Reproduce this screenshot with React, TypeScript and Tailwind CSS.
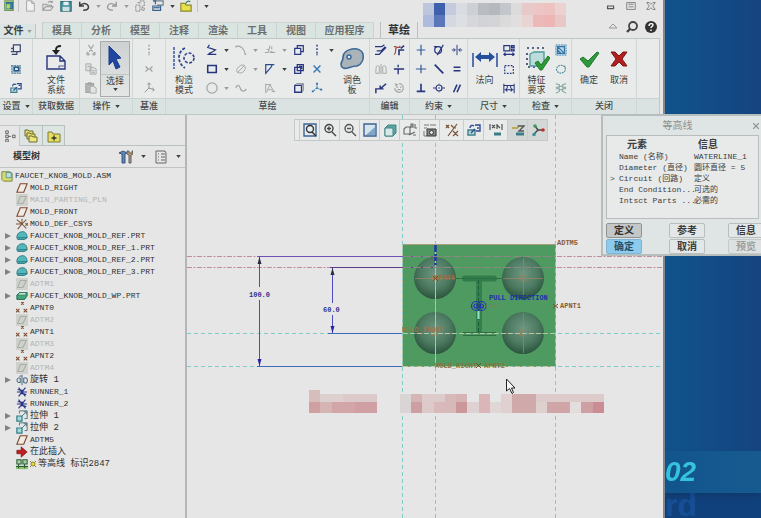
import { ReactNode } from "react";
import clsx from "clsx";

const NAVY = "#27357e";
const GRAY = "#a3a6a6";
const TEAL = "#4a8f99";

function Icon({ children, size = "sm" }: { children: ReactNode; size?: "xs" | "sm" | "lg" }) {
  return (
    <svg
      viewBox={size === "lg" ? "0 0 26 26" : "0 0 14 14"}
      className={clsx(
        "shrink-0",
        size === "xs" && "w-3 h-3",
        size === "sm" && "w-3.5 h-3.5",
        size === "lg" && "w-[26px] h-[26px]"
      )}
      fill="none"
      stroke={NAVY}
      strokeWidth="1.4"
      aria-hidden="true"
    >
      {children}
    </svg>
  );
}

function Caret({ dim = false }: { dim?: boolean }) {
  return (
    <svg viewBox="0 0 6 4" className="w-[5px] h-[3px] shrink-0" aria-hidden="true">
      <path d="M0 0h6L3 4z" fill={dim ? "#9a9c9c" : "#3d3f3f"} />
    </svg>
  );
}

/* ---------- quick access bar ---------- */

const quickIcons: Record<string, ReactNode> = {
  app: (
    <>
      <path d="M2 1h10v11H2z" fill="#cfe08a" stroke="#6f9a5a" />
      <path d="M4 3h7v7H4z" fill="#3f8f9c" stroke="#2f6d8a" />
      <path d="M4 5h4v5H4z" fill="#b7d86c" stroke="none" />
    </>
  ),
  new: <path d="M3 1h6l3 3v9H3zM9 1v3h3" fill="#f1f1f1" stroke="#9b9d9d" strokeWidth="1" />,
  open: <path d="M1 12V5h4l1 1h5v2M1 12l3-4h9l-3 4zM7 3c2-2 4-2 5 0m0 0V1m0 2h-2" stroke="#999" strokeWidth="1.2" />,
  save: (
    <>
      <path d="M1 2h12v11H1z" fill="#4b9aa3" stroke="#2c6b78" />
      <path d="M4 2h6v4H4z" fill="#e4eeee" stroke="none" />
      <path d="M3 8h8v5H3z" fill="#cfe0e0" stroke="none" />
    </>
  ),
  undo: <path d="M6 12c5 0 7-2 6-5S7 3 3 6M2 2v5h5" stroke="#3f4242" strokeWidth="1.8" />,
  redo: <path d="M8 12C3 12 1 10 2 7s5-4 9-1M12 2v5H7" stroke="#999c9c" strokeWidth="1.6" />,
  regen: <path d="M2 6h5v7H2zM7 4V1h5v6H9M4 3h2M9 9h3v3H9z" stroke="#999" strokeDasharray="2 1" />,
  windows: (
    <>
      <path d="M2 1h11v5H6" stroke="#6d7f92" />
      <path d="M1 7h9v5H1zM1 1h3v4" stroke="#35608f" />
      <path d="M2 9h7" stroke="#35608f" />
    </>
  ),
  close: (
    <>
      <path d="M1 4h5l1 2h6v7H1z" fill="#e9e04e" stroke="#8c8a2e" />
      <path d="M7 4c1-3 3-3 5-2" stroke="#3b7a4a" />
    </>
  ),
};

function QuickButton({ name, label }: { name: string; label: string }) {
  return (
    <button type="button" aria-label={label} className="w-[18px] flex justify-center">
      <Icon size="xs">{quickIcons[name]}</Icon>
    </button>
  );
}

const titleBlocks = [
  ["#bcc6dc", "#3e60ad", "#c3cbdd", "#d9dce2", "#cdd0d4", "#b9bdc2", "#b4b8bf", "#c3c6ca", "#dcdbdc", "#e8c9ca", "#ecc5c4", "#edc3c2", "#ebd1d0"],
  ["#aebbdc", "#5b77bb", "#d5d8e0", "#dedfe3", "#d6d7da", "#d1d3d6", "#d3d4d6", "#dadadb", "#e0dedf", "#ead3d3", "#edb9b8", "#edb5b4", "#e8c8c7"],
];

function QuickAccess() {
  return (
    <div className="flex items-center h-3 w-full">
      <QuickButton name="app" label="应用程序菜单" />
      <span className="w-px h-3 bg-[#c3c6c6] mr-[2px]" />
      <QuickButton name="new" label="新建" />
      <QuickButton name="open" label="打开" />
      <QuickButton name="save" label="保存" />
      <QuickButton name="undo" label="撤消" />
      <span className="w-[10px] flex justify-center"><Caret dim /></span>
      <QuickButton name="redo" label="重做" />
      <span className="w-[10px] flex justify-center"><Caret dim /></span>
      <QuickButton name="regen" label="重新生成" />
      <QuickButton name="windows" label="窗口" />
      <span className="w-[10px] flex justify-center"><Caret /></span>
      <QuickButton name="close" label="关闭" />
      <span className="w-px h-3 ml-[2px] bg-[#c3c6c6] mr-[6px]" />
      <Caret />
      <div className="ml-auto flex gap-2 pr-[6px]">
        <button type="button" aria-label="最小化">
          <Icon size="xs"><path d="M3 7h7v3H3z" stroke="#555" /></Icon>
        </button>
        <button type="button" aria-label="还原">
          <Icon size="xs"><path d="M2 3h10v8H2zM4 5h6M4 8h6" stroke="#777" strokeWidth="1" /></Icon>
        </button>
        <button type="button" aria-label="关闭窗口">
          <Icon size="xs"><path d="M2 3h3l2 2 2-2h3L9 7l3 4H9L7 9l-2 2H2l3-4z" stroke="#777" strokeWidth="1" /></Icon>
        </button>
      </div>
    </div>
  );
}

const tabs = ["模具", "分析", "模型", "注释", "渲染", "工具", "视图", "应用程序"];

function TabRow() {
  return (
    <nav className="flex items-end mt-[10px] h-4 text-[10px] leading-[14px] text-[#6b6f6f] font-bold">
      <button type="button" className="w-9 h-[14px] flex items-center justify-center gap-[3px] bg-[#dbe5e3] border-r border-[#bdc6c5] text-[#3a3d3d]">
        文件 <Caret dim />
      </button>
      <div className="flex h-4 ml-[6px] bg-[#dae5e2] border-l border-t border-[#c4cfcd] border-t-[#ccd5d3]">
        {tabs.map((tab) => (
          <button
            key={tab}
            type="button"
            className={clsx("border-r border-[#cad3d1]", tab === "应用程序" ? "w-[58px]" : "w-[39px]")}
          >
            {tab}
          </button>
        ))}
      </div>
      <button type="button" className="w-[38px] h-4 ml-[6px] border-x border-[#b9c2c1] text-[11px] text-[#2f3232]">
        草绘
      </button>
      <div className="ml-auto flex items-center gap-[5px] pr-[5px] mb-1">
        <button type="button" aria-label="最小化功能区">
          <Icon><path d="M3 8h8L7 4z" stroke="#999" strokeWidth="1" /></Icon>
        </button>
        <button type="button" aria-label="搜索">
          <Icon>
            <circle cx="8" cy="6" r="4" stroke="#444" strokeWidth="1.8" />
            <path d="M5 9l-3 3" stroke="#444" strokeWidth="2.4" />
          </Icon>
        </button>
        <button type="button" aria-label="帮助">
          <Icon>
            <circle cx="7" cy="7" r="6" fill="#333" stroke="none" />
            <path d="M5 6c0-3 4-3 4-1 0 1.500-2 1.500-2 3M7 9.500v1.500" stroke="#fff" />
          </Icon>
        </button>
      </div>
    </nav>
  );
}

/* ---------- ribbon ---------- */

const I: Record<string, ReactNode> = {
  setup1: <path d="M4 1h8v8H4zM1 9h9M4 5H2v1M2 12h6v-3" stroke="#39446e" />,
  setup2: (
    <>
      <path d="M2 3h10v9H2z" fill="#a9c4cd" stroke="#5f8aa0" strokeDasharray="2 1" />
      <path d="M5 5h5v4H5z" fill="#e2eaee" stroke="#27528a" strokeWidth="1.8" />
    </>
  ),
  setup3: (
    <>
      <path d="M1 7h7v5H1z" fill="#b8dada" stroke="#3c7f8c" />
      <path d="M8 2h5v6H9M3 5c0-3 3-3 4-2M4 10l4-4M10 4h2" stroke="#2b4a92" />
    </>
  ),
  cut: <path d="M4 1l5 8M10 1L5 9M3 10a1.500 1.500 0 1 0 2 2zM11 10a1.500 1.500 0 1 1-2 2z" stroke={GRAY} />,
  copy: <path d="M1 1h6v8H1zM6 5h4l3 2v6H6zM3 4h3M8 9h3M8 11h3" stroke={GRAY} fill="#dedfdf" strokeWidth="1" />,
  paste: (
    <>
      <path d="M1 2h9v10H1zM4 1h3v2H4z" fill="#b4b6b6" stroke={GRAY} />
      <path d="M6 5h4l3 2v6H6z" fill="#e2e3e3" stroke={GRAY} strokeWidth="1" />
    </>
  ),
  axis: <path d="M7 1v2M7 5v2M7 9v2M7 12v1" stroke="#8d9090" />,
  point: <path d="M3 4l3 3-3 3M11 4L8 7l3 3M6 7h2" stroke="#9a9d9d" />,
  csys: <path d="M7 7V1M7 7l6 2M7 7l-5 5M5 3l2-2 2 2M11 7l2 2-2 2" stroke="#8d9090" strokeWidth="1.100" />,
  line: <path d="M4 1L2 4l9 3-8 5h9M2 4l3 1M3 12l2-2" />,
  rect: <path d="M2 3h10v8H2z" strokeWidth="1.800" />,
  circle: <circle cx="7" cy="7" r="6" stroke={GRAY} />,
  arc: <path d="M1 3c6-2 10 3 11 9M1 2v2M11 12h2" stroke={GRAY} />,
  ellipse: <path d="M3 11C-1 7 8 0 11 3s-1 11-8 8zM3 11l8-8" stroke={GRAY} strokeWidth="1.100" />,
  spline: <path d="M1 7c1-4 4-4 5 0s5 5 7 1" stroke={GRAY} />,
  fillet: <path d="M1 10h4l2-8M7 10h6M3 6l8 4M9 3v3" stroke={GRAY} strokeWidth="1.200" />,
  chamfer: <path d="M2 13V2h10M2 12l7-8M9 4V2" stroke="#2a4a90" />,
  text: <path d="M2 2v11M2 3h6M3 12l4-9 5 9M5 9h5M9 11h4" stroke={GRAY} strokeWidth="1.100" />,
  offset: <path d="M2 5h7v7H2zM5 5V2h7v7H9" />,
  thicken: <path d="M2 5h7v7H2zM5 8V2h7v7H5zM7 4h3v3" strokeWidth="1.500" />,
  project: (
    <>
      <path d="M2 4h8v8H2z" strokeWidth="1.600" />
      <path d="M2 4l2-2h8v8l-2 2M10 4l2-2" stroke="#6c7486" strokeWidth="1" />
    </>
  ),
  cline: <path d="M7 1v2M7 5v2M7 9v2M7 12v1" strokeWidth="1.700" />,
  cpoint: <path d="M3 3l8 8M11 3l-8 8" stroke="#367ab8" strokeWidth="1.700" />,
  ccsys: (
    <>
      <path d="M7 7V2M7 7l5 2M7 7l-5 4" stroke="#3b7fae" strokeDasharray="2 1" />
      <path d="M6 1h2v2H6zM11 8h2v2h-2zM1 10h2v2H1z" fill="#3267a5" stroke="none" />
    </>
  ),
  modify: <path d="M0 3h8M0 12h5l8-8M8 3l3-2M2 8h5l5-5" />,
  mirror: <path d="M7 1v12M5 4C1 1 1 6 1 12h4zM9 4c4-3 4 2 4 8H9z" stroke={GRAY} strokeWidth="1.100" />,
  divide: <path d="M1 13V8h7M6 8l7-6M6 8V4M6 8h4" strokeWidth="1.700" />,
  trim: (
    <>
      <path d="M1 12c4 0 0-8 4-8h3V2M1 3h3" stroke="#a34a3a" />
      <path d="M7 13V7h6M9 5l4-3" strokeWidth="1.900" />
    </>
  ),
  corner: <path d="M1 7h12M6 8v5M6 2v3" strokeWidth="1.600" />,
  rotate: <path d="M7 2a5 5 0 1 1-5 5M4 6h2M8 6h2M5 9h4M2 2l3 1-2 2" stroke={GRAY} />,
  vert: <path d="M7 1v12M2 7h10" stroke="#335b9a" />,
  horiz: <path d="M1 7h12M7 2v10" stroke="#335b9a" />,
  perp: <path d="M7 2v9M2 11h10" strokeWidth="1.900" />,
  tangent: (
    <>
      <circle cx="6" cy="7" r="4" />
      <path d="M12 1L5 13M1 3h4" />
    </>
  ),
  mid: <path d="M2 2l10 10M6 6l2 2" strokeWidth="2" />,
  coin: (
    <>
      <circle cx="7" cy="7" r="3.500" />
      <path d="M0 7h3M11 7h3M6 7h2M7 2v1M7 11v1" />
    </>
  ),
  sym: <path d="M7 1v12M1 7h4M9 7h4M3 5l2 2-2 2M11 5L9 7l2 2" strokeWidth="1.100" />,
  equal: <path d="M3 5h8M3 9h8" strokeWidth="1.800" />,
  para: <path d="M3 12L7 3M7 12l4-9" strokeWidth="1.800" />,
  dim1: <path d="M1 2h7v6H1zM10 2h3v2h-3zM10 6h3v2h-3zM1 12h12M3 10l-2 2 2 2M11 10l2 2-2 2" />,
  dim2: <path d="M2 3h10v9H2z" strokeDasharray="2 1.500" />,
  dim3: <path d="M1 2v11M13 2v11M5 4v3M9 4v3M1 4h12M2 9h10M5 7L3 9l2 2M9 7l2 2-2 2" strokeWidth="1.200" />,
  insp1: (
    <>
      <path d="M1 1h12v12H1z" fill="#bcd8e6" stroke="#6a9cbc" strokeDasharray="2 1" />
      <path d="M3 3l8 8M3 7l4 4M3 3h8v8H3z" stroke="#3577a6" />
    </>
  ),
  insp2: <path d="M2 9c-2-6 8-9 10-3 1 6-7 8-10 3M10 4h2v2" stroke={TEAL} strokeDasharray="2 1" />,
  insp3: <path d="M1 2l4 1v3H1M1 8h4v3l-4 2M13 2L9 3v3h4M13 8H9v3l4 2M5 5h4M5 9h4" stroke="#7d9f9b" strokeWidth="1.200" />,
};

type Cell = { icon: string; label: string; caret?: "dim" | "dark" };

function SmallColumn({ cells, carets = false }: { cells: Cell[]; carets?: boolean }) {
  return (
    <div className="flex flex-col gap-px shrink-0">
      {cells.map((cell) => (
        <div key={cell.icon} className="flex items-center h-[18px]">
          <button type="button" aria-label={cell.label} className="w-[18px] flex justify-center">
            <Icon size="xs">{I[cell.icon]}</Icon>
          </button>
          {carets && (
            <span className="w-[11px] flex justify-center">
              {cell.caret && <Caret dim={cell.caret === "dim"} />}
            </span>
          )}
        </div>
      ))}
    </div>
  );
}

function BigButton({
  lines,
  selected = false,
  children,
}: {
  lines: string[];
  selected?: boolean;
  children: ReactNode;
}) {
  return (
    <button
      type="button"
      className={clsx(
        "w-[30px] h-14 shrink-0 flex flex-col items-center text-[9px] leading-[10px] text-[#3a3d3d]",
        selected && "border border-[#a8acac] bg-gradient-to-b from-[#cdd1d1] to-[#e4e6e6]"
      )}
    >
      <span className={clsx("h-[34px] w-full flex items-center justify-center", selected && "border-b border-[#bfc3c3] -mt-px mb-px")}>
        <Icon size="lg">{children}</Icon>
      </span>
      {lines.map((line) => (
        <span key={line} className="whitespace-nowrap">{line}</span>
      ))}
      {selected && <span className="mt-[2px]"><Caret /></span>}
    </button>
  );
}

function Group({
  label,
  width,
  caret = false,
  children,
}: {
  label: string;
  width: string;
  caret?: boolean;
  children: ReactNode;
}) {
  return (
    <section className={clsx("flex flex-col shrink-0 border-r border-[#cfd7d5]", width)}>
      <div className="flex justify-center h-[59px] pt-[2px]">{children}</div>
      <h2 className="h-4 flex items-center justify-center gap-1 bg-[#dae3e1] border-t border-[#c9d2d0] text-[9px] leading-none text-[#46494a] font-medium whitespace-nowrap">
        {label}
        {caret && <Caret />}
      </h2>
    </section>
  );
}

function Ribbon() {
  return (
    <div className="flex mr-[3px] bg-[#e8ebea] border-y border-r border-[#bfc8c6]">
      <Group label="设置" width="w-[33px]" caret>
        <SmallColumn cells={[{ icon: "setup1", label: "截面设置" }, { icon: "setup2", label: "草绘设置" }, { icon: "setup3", label: "草绘视图" }]} />
      </Group>
      <Group label="获取数据" width="w-[47px]">
        <BigButton lines={["文件", "系统"]}>
          <path d="M4 11h13l5 5v8H4zM17 11v5h5" strokeWidth="1.400" />
          <path d="M4 20v4h12v-3h6" stroke="#5a659a" strokeWidth="1.200" />
          <path d="M18 1c-4 0-5 1-5 4" stroke="#222" strokeWidth="2" />
          <path d="M9 5h8l-4 5z" fill="#222" stroke="none" />
        </BigButton>
      </Group>
      <Group label="操作" width="w-[53px]" caret>
        <SmallColumn cells={[{ icon: "cut", label: "剪切" }, { icon: "copy", label: "复制" }, { icon: "paste", label: "粘贴" }]} />
        <BigButton lines={["选择"]} selected>
          <path d="M7 1l12 12-5 1 4 8-4 2-3-8-4 4z" fill="#1f479f" stroke="#1a3c8c" strokeWidth="1" />
        </BigButton>
      </Group>
      <Group label="基准" width="w-[33px]">
        <SmallColumn cells={[{ icon: "axis", label: "中心线" }, { icon: "point", label: "点" }, { icon: "csys", label: "坐标系" }]} />
      </Group>
      <Group label="草绘" width="w-[204px]">
        <div className="flex w-full pl-[3px]">
          <BigButton lines={["构造", "模式"]}>
            <path d="M3 2v22" stroke="#3c55a8" strokeWidth="1.500" strokeDasharray="3 1" />
            <path d="M14 3c-8 4-8 15 0 20" stroke="#33478c" strokeWidth="1.800" strokeDasharray="3 1.500" />
            <circle cx="18" cy="13" r="5" stroke="#33478c" strokeWidth="1.600" strokeDasharray="3 1.500" />
          </BigButton>
          <div className="flex ml-1">
            <SmallColumn carets cells={[{ icon: "line", label: "线", caret: "dark" }, { icon: "rect", label: "矩形", caret: "dark" }, { icon: "circle", label: "圆", caret: "dim" }]} />
            <SmallColumn carets cells={[{ icon: "arc", label: "弧", caret: "dim" }, { icon: "ellipse", label: "椭圆", caret: "dim" }, { icon: "spline", label: "样条" }]} />
            <SmallColumn carets cells={[{ icon: "fillet", label: "圆角", caret: "dim" }, { icon: "chamfer", label: "倒角", caret: "dark" }, { icon: "text", label: "文本" }]} />
            <SmallColumn cells={[{ icon: "offset", label: "偏移" }, { icon: "thicken", label: "加厚" }, { icon: "project", label: "投影" }]} />
            <SmallColumn carets cells={[{ icon: "cline", label: "构造中心线", caret: "dark" }, { icon: "cpoint", label: "构造点" }, { icon: "ccsys", label: "构造坐标系" }]} />
          </div>
          <BigButton lines={["调色", "板"]}>
            <path d="M2 19c0 4 3 5 7 4 3-1 5-2 9-2 5-2 7-7 6-12-1-4-6-6-11-5S4 8 4 12c0 3 0 3-1 4z" fill="#a9b3b8" stroke="#3a6796" strokeWidth="1.600" />
            <circle cx="10" cy="12" r="2" fill="#dce8ee" stroke="#3a6796" />
          </BigButton>
        </div>
      </Group>
      <Group label="编辑" width="w-[40px]">
        <SmallColumn cells={[{ icon: "modify", label: "修改" }, { icon: "mirror", label: "镜像" }, { icon: "divide", label: "分割" }]} />
        <SmallColumn cells={[{ icon: "trim", label: "删除段" }, { icon: "corner", label: "拐角" }, { icon: "rotate", label: "旋转调整大小" }]} />
      </Group>
      <Group label="约束" width="w-[58px]" caret>
        <SmallColumn cells={[{ icon: "vert", label: "竖直" }, { icon: "horiz", label: "水平" }, { icon: "perp", label: "垂直" }]} />
        <SmallColumn cells={[{ icon: "tangent", label: "相切" }, { icon: "mid", label: "中点" }, { icon: "coin", label: "重合" }]} />
        <SmallColumn cells={[{ icon: "sym", label: "对称" }, { icon: "equal", label: "相等" }, { icon: "para", label: "平行" }]} />
      </Group>
      <Group label="尺寸" width="w-[52px]" caret>
        <BigButton lines={["法向"]}>
          <path d="M1 8v14M25 8v14" stroke="#31579c" strokeWidth="1.600" />
          <path d="M3 12l6-5v3h8V7l6 5-6 5v-3H9v3z" fill="#24509e" stroke="none" />
        </BigButton>
        <SmallColumn cells={[{ icon: "dim1", label: "周长" }, { icon: "dim2", label: "参考" }, { icon: "dim3", label: "基线" }]} />
      </Group>
      <Group label="检查" width="w-[52px]" caret>
        <BigButton lines={["特征", "要求"]}>
          <path d="M3 3h20M3 8v14h8" stroke="#2c3a66" strokeWidth="1.600" strokeDasharray="2 3" />
          <path d="M6 9l4-2h10v10l-3 4H6z" fill="#bcdcdc" stroke="#4e9a9c" strokeWidth="1.300" />
          <path d="M11 18l3-2 3 4 7-9 2 2-8 12h-2z" fill="#2f9a35" stroke="#1f7a2a" strokeWidth="1" />
        </BigButton>
        <SmallColumn cells={[{ icon: "insp1", label: "着色封闭环" }, { icon: "insp2", label: "突出显示开放端" }, { icon: "insp3", label: "重叠几何" }]} />
      </Group>
      <Group label="关闭" width="w-[65px]">
        <BigButton lines={["确定"]}>
          <path d="M4 14l3-2 5 4 9-9 2 1-10 14h-2z" fill="#2f9a3c" stroke="#1c7a2c" strokeWidth="1" />
        </BigButton>
        <BigButton lines={["取消"]}>
          <path d="M5 7h4l4 4 4-4h4l-5 7 5 7h-4l-4-4-4 4H5l5-7z" fill="#b21f1f" stroke="#7d1616" strokeWidth="1" />
        </BigButton>
      </Group>
      <div className="flex-1 flex flex-col">
        <div className="flex-1" />
        <div className="h-4 bg-[#dae3e1] border-t border-[#c9d2d0]" />
      </div>
    </div>
  );
}

/* ---------- model tree ---------- */

const treeIcons: Record<string, ReactNode> = {
  asm: (
    <>
      <path d="M1 2h9l3 2v9H3l-2-2z" fill="#d8dc6a" stroke="#6f7f3a" strokeWidth="1" />
      <path d="M6 3h6v6H6z" fill="#bfe0e0" stroke="#4c8f94" strokeWidth="1" />
    </>
  ),
  plane: <path d="M5 2h8l-4 10H1z" fill="#f2ebe2" stroke="#7c4a34" strokeWidth="1.300" />,
  planeOff: (
    <>
      <path d="M0 0h14v14H0z" fill="#cfd2cc" stroke="none" />
      <path d="M5 3h7l-4 8H2z" stroke="#a9ada4" strokeWidth="1.200" />
    </>
  ),
  csys: <path d="M7 7V1M7 7L1 2M7 7H0M7 7l-5 6M7 7l5-5M7 7l5 5M11 6l3 3M14 6l-3 3" stroke="#7c5334" strokeWidth="1.200" />,
  part: (
    <>
      <path d="M1 9c0-5 3-7 7-7 3 0 5 3 5 7l-3 2H2z" fill="#54b7ba" stroke="#1f6f78" strokeWidth="1" />
      <path d="M2 9h11" stroke="#1f6f78" strokeWidth="1" />
    </>
  ),
  block: (
    <>
      <path d="M1 6l3-3h9v4l-3 4H1z" fill="#3fa77c" stroke="#1d6448" strokeWidth="1" />
      <path d="M2 6l2-3h9l-3 3z" fill="#bfe6d4" stroke="#1d6448" strokeWidth=".8" />
    </>
  ),
  points: <path d="M6 0l3 3M9 0L6 3M0 8l4 4M4 8l-4 4M9 8l4 4M13 8l-4 4" stroke="#7c4a2c" strokeWidth="1.300" />,
  revolve: <path d="M7 1v12M5 5C1 3 0 9 3 10h2V5M9 5c3-2 5 1 4 4s-3 1-4 1zM4 3l2-1" stroke="#4b6c80" strokeWidth="1.200" />,
  runner: <path d="M1 7h12M3 2l8 10M11 2L3 12M2 4l3 1M12 10L9 9M7 4v6" stroke="#2b3287" strokeWidth="1.300" />,
  extrude: (
    <>
      <path d="M1 7h6v6H1z" fill="#a8d8da" stroke="#2f7f88" />
      <path d="M4 4V1h9v9h-3M6 8l6-6M9 2h3v3" stroke="#4c7480" strokeWidth="1.100" />
    </>
  ),
  insert: <path d="M1 5h5V1l7 6-7 6V9H1z" fill="#bf1f1f" stroke="#7a1414" strokeWidth=".8" />,
  water: (
    <>
      <path d="M0 9h14v4H0z" fill="#8cc06a" stroke="none" />
      <path d="M1 2h5v5H1zM8 2h5v5H8z" fill="#a9cfa4" stroke="#2c5a35" strokeWidth="1.200" />
      <path d="M0 10h14M3 7v5M10 7v5" stroke="#2c5a35" strokeWidth="1.200" />
    </>
  ),
};

type Node = { name: string; icon: string; open?: boolean; off?: boolean; cjk?: boolean; mark?: boolean };

const nodes: Node[] = [
  { name: "MOLD_RIGHT", icon: "plane" },
  { name: "MAIN_PARTING_PLN", icon: "planeOff", off: true },
  { name: "MOLD_FRONT", icon: "plane" },
  { name: "MOLD_DEF_CSYS", icon: "csys" },
  { name: "FAUCET_KNOB_MOLD_REF.PRT", icon: "part", open: true },
  { name: "FAUCET_KNOB_MOLD_REF_1.PRT", icon: "part", open: true },
  { name: "FAUCET_KNOB_MOLD_REF_2.PRT", icon: "part", open: true },
  { name: "FAUCET_KNOB_MOLD_REF_3.PRT", icon: "part", open: true },
  { name: "ADTM1", icon: "planeOff", off: true },
  { name: "FAUCET_KNOB_MOLD_WP.PRT", icon: "block", open: true },
  { name: "APNT0", icon: "points" },
  { name: "ADTM2", icon: "planeOff", off: true },
  { name: "APNT1", icon: "points" },
  { name: "ADTM3", icon: "planeOff", off: true },
  { name: "APNT2", icon: "points" },
  { name: "ADTM4", icon: "planeOff", off: true },
  { name: "旋转 1", icon: "revolve", open: true, cjk: true },
  { name: "RUNNER_1", icon: "runner" },
  { name: "RUNNER_2", icon: "runner" },
  { name: "拉伸 1", icon: "extrude", open: true, cjk: true },
  { name: "拉伸 2", icon: "extrude", open: true, cjk: true },
  { name: "ADTM5", icon: "plane" },
  { name: "在此插入", icon: "insert", cjk: true },
  { name: "等高线 标识2847", icon: "water", cjk: true, mark: true },
];

function ModelTree() {
  return (
    <aside className="w-[187px] shrink-0 flex flex-col pt-[10px] border-r-2 border-[#b4b7b7]">
      <div className="flex h-[21px]">
        <button type="button" aria-label="模型树" className="w-5 flex items-center justify-center border-t border-r border-[#c3c9c8]">
          <Icon size="xs"><path d="M2 1h3v3H2zM2 6h3v3H2zM2 11h3v3H2zM10 6h3v3h-3zM5 7.500h3" stroke="#555" strokeWidth="1" /></Icon>
        </button>
        <button type="button" aria-label="文件夹浏览器" className="w-[23px] flex items-center justify-center bg-[#dde5e3] border-t border-r border-b border-[#b9c1c0]">
          <Icon>
            <path d="M1 1h3l1 1h4v5H1z" fill="#e4dd75" stroke="#6f6c34" strokeWidth="1" />
            <path d="M3 4h3l1 1h4v5H3z" fill="#e4dd75" stroke="#6f6c34" strokeWidth="1" />
            <path d="M5 7h3l1 1h4v5H5z" fill="#ece67c" stroke="#6f6c34" strokeWidth="1" />
          </Icon>
        </button>
        <button type="button" aria-label="收藏夹" className="w-[22px] flex items-center justify-center bg-[#dde5e3] border-t border-r border-b border-[#b9c1c0]">
          <Icon>
            <path d="M1 3h4l1 2h7v8H1z" fill="#e6df62" stroke="#7d7a34" strokeWidth="1" />
            <path d="M7 6.500v5M4.500 9h5" stroke="#333" />
          </Icon>
        </button>
        <div className="flex-1 border-b border-[#b9c1c0]" />
      </div>
      <div className="flex items-center h-[22px] pl-[13px] pr-1 border-b border-[#c0c5c4]">
        <h1 className="text-[9px] font-bold text-[#333]">模型树</h1>
        <button type="button" aria-label="设置" className="ml-auto flex items-center gap-2">
          <Icon>
            <path d="M0 3l4-2 4 2-2 1v9H3V4z" fill="#5f86b5" stroke="#37547c" strokeWidth="1" />
            <path d="M8 1v3l2 1v8h2V5l2-1V1h-1v2h-3V1z" fill="#d49a4c" stroke="#53617a" strokeWidth="1" />
          </Icon>
          <Caret />
        </button>
        <button type="button" aria-label="显示" className="ml-2 flex items-center gap-2">
          <Icon><path d="M2 1h9l1 2v10H2zM4 4h1M7 4h4M4 7h1M7 7h4M4 10h1M7 10h4" stroke="#666" strokeWidth="1" /></Icon>
          <Caret />
        </button>
      </div>
      <ul className="pt-[2px] font-['Liberation_Mono','Noto_Sans_CJK_SC',monospace] text-[8px] leading-3 text-[#2e3030]">
        <li className="flex items-center h-3 pl-px gap-[2px]">
          <Icon size="xs">{treeIcons.asm}</Icon>
          FAUCET_KNOB_MOLD.ASM
        </li>
        {nodes.map((node) => (
          <li key={node.name} className={clsx("flex items-center h-3 whitespace-nowrap", node.off && "text-[#b3b5b4]")}>
            <span className="w-4 pl-[5px]">
              {node.open && (
                <svg viewBox="0 0 6 6" className="w-1.5 h-1.5" aria-hidden="true">
                  <path d="M0 0l6 3-6 3z" fill="#808383" />
                </svg>
              )}
            </span>
            <Icon size="xs">{treeIcons[node.icon]}</Icon>
            {node.mark && (
              <svg viewBox="0 0 8 8" className="w-2 h-2 mx-px" aria-hidden="true">
                <path d="M1 1l6 6M7 1L1 7" stroke="#7d7a30" />
                <circle cx="4" cy="4" r="2" fill="#e6dc3c" stroke="#8f8a2c" />
              </svg>
            )}
            <span className={clsx(node.cjk && "text-[9px]", !node.mark && "ml-[2px]")}>{node.name}</span>
          </li>
        ))}
      </ul>
    </aside>
  );
}

/* ---------- graphics area ---------- */

const viewTools: { label: string; wide?: boolean; pressed?: boolean; art: ReactNode }[] = [
  { label: "重新调整", art: <><path d="M1 1h12v12H1z" stroke="#3e6496" /><circle cx="7" cy="6" r="3.500" fill="#e4f0f2" stroke="#333" /><path d="M9 9l4 4" stroke="#333" /></> },
  { label: "放大", art: <><circle cx="6" cy="5.500" r="4" stroke="#444" /><path d="M4 5.500h4M6 3.500v4M9 9l4 4" stroke="#444" /></> },
  { label: "缩小", art: <><circle cx="6" cy="5.500" r="4" stroke="#555" /><path d="M4 5.500h4M9 9l4 4" stroke="#555" /></> },
  { label: "重画", art: <><path d="M1 1h12v12H1z" fill="#d5e5ee" stroke="#3c618f" /><path d="M3 12L12 4v8z" fill="#7fa6c6" stroke="none" /></> },
  { label: "显示样式", art: <><path d="M2 5l3-3h8v8l-3 3H2z" fill="#5ea6a3" stroke="#3f8686" strokeWidth="1" /><path d="M2 5h8v8H2z" fill="#d7e8e6" stroke="#3f8686" strokeWidth="1" /></> },
  { label: "已保存方向", art: <path d="M1 6l2-2h4v7H1zM8 5V1h2v4M8 3h2M12 1v4h2M6 12l6-3M10 12h3" stroke="#666" strokeWidth="1.100" /> },
  { label: "视图管理器", art: <><path d="M1 2h5M7 2h6M1 5h3M1 8v5h3" stroke="#777" strokeWidth="1" /><path d="M4 6h9v7H4z" fill="#8b8b85" stroke="#333" strokeWidth="1" /><circle cx="8.500" cy="9.500" r="2" fill="#e6e6e6" stroke="#333" strokeWidth="1" /></> },
  { label: "基准显示", wide: true, art: <path d="M1 2l3 3M4 2L1 5M12 1L3 13M8 4l3 1M8 8l5 5M13 8l-5 5M6 2l2 2" stroke="#7b5236" strokeWidth="1.200" /> },
  { label: "草绘方向", art: <><path d="M1 7h7v5H1z" fill="#b8dada" stroke="#3c7f8c" /><path d="M8 2h5v6H9M3 5c0-3 3-3 4-2M4 10l4-4M11 4v2" stroke="#2b4a92" /></> },
  { label: "草绘器显示", wide: true, art: <><path d="M1 1v6M13 1v6M3 2l3 3M6 2L3 5M8 1v5M8 2l3 3" stroke="#555" strokeWidth="1.200" /><path d="M5 11h7" stroke="#3b7d84" strokeWidth="3" /></> },
  { label: "注释显示", pressed: true, art: <><path d="M1 5h6M7 2v3" stroke="#b59b30" /><path d="M7 3h6L8 8h5" stroke="#555" /><path d="M5 11h8" stroke="#3b7d84" strokeWidth="3" /></> },
  { label: "旋转中心", pressed: true, art: <><path d="M4 3l3 4 5 0M7 7l-4 4" stroke="#444" /><circle cx="4" cy="3" r="1.800" fill="#3d9a52" stroke="none" /><circle cx="12" cy="7" r="1.800" fill="#c03030" stroke="none" /><circle cx="3" cy="11.500" r="1.800" fill="#3d8fa0" stroke="none" /></> },
];

// Redacted caption: [x, y, width, height, colour]
const captionBlocks: [number, number, number, number, string][] = [
  [309, 390, 11, 12, "#d8bdbd"], [320, 394, 23, 8, "#dfd0d0"], [343, 394, 34, 8, "#dccaca"],
  [309, 402, 11, 11, "#cf9fa1"], [320, 402, 12, 11, "#d6b4b4"], [332, 402, 23, 11, "#d2a6a8"], [355, 402, 22, 11, "#cf9fa3"],
  [400, 394, 11, 19, "#d8d5d4"], [411, 394, 11, 8, "#d5b5b6"], [411, 402, 11, 11, "#ce9fa2"],
  [422, 394, 23, 8, "#ddcbcb"], [422, 402, 12, 11, "#ddc9c9"], [434, 402, 11, 11, "#d9b9ba"],
  [445, 394, 11, 19, "#d8b9ba"], [456, 394, 11, 8, "#d6b3b4"], [456, 402, 11, 11, "#cb979b"],
  [467, 402, 12, 11, "#dfd1d1"], [479, 394, 11, 19, "#dbb6b8"], [490, 402, 11, 11, "#e0d6d6"],
  [501, 394, 11, 19, "#e0d0d0"], [512, 394, 24, 19, "#d0a9ab"], [536, 394, 68, 8, "#ddcbcb"],
  [536, 402, 11, 11, "#dfd0d0"], [547, 402, 23, 11, "#d0a5a7"], [570, 402, 11, 11, "#e3dddd"],
  [581, 402, 12, 11, "#cfa0a3"], [593, 402, 11, 11, "#cb8d93"],
];

const spheres = [[435, 278], [523, 278], [435, 333], [523, 333]];

function Model() {
  return (
    <svg className="absolute inset-0 w-full h-full" aria-label="模具模型">
      <defs>
        <radialGradient id="ball" cx=".5" cy=".4" r=".6">
          <stop offset="0" stopColor="#6f9681" />
          <stop offset=".6" stopColor="#4c7a61" />
          <stop offset="1" stopColor="#2c553e" />
        </radialGradient>
      </defs>
      {/* window coordinates, shifted by the tree and ribbon */}
      <g transform="translate(-187 -115)" fill="none">
        <path d="M187 256.500H1600M187 267.500H1600" stroke="#c48b9a" strokeDasharray="5 1.500 2 1.500" />
        <path d="M402.500 244.500h153v122h-153z" fill="#4f9a60" stroke="#8f9a6c" />
        <path d="M402 244.500h154" stroke="#a79f78" />

        {spheres.map(([x, y]) => (
          <g key={`${x}-${y}`}>
            <circle cx={x} cy={y} r="21" fill="url(#ball)" />
            <path d={`M${x - 20} ${y + 0.5}h40M${x + 0.5} ${y - 20}v40`} stroke="#9b8464" strokeWidth=".8" />
            <circle cx={x} cy={y} r="3" stroke="#a08058" strokeWidth=".8" />
          </g>
        ))}

        <path d="M465 278.500h29" stroke="#2f7d49" strokeWidth="6" strokeLinecap="round" />
        <path d="M479 281v52" stroke="#33804c" strokeWidth="6" />
        <path d="M463 332.500h33M463 335.500h33M455 278.500h47" stroke="#2e6f43" />
        <path d="M478.500 280v53" stroke="#1f5c38" strokeDasharray="4 2" />
        <path d="M478.500 311v8" stroke="#8fe8c8" strokeWidth="2" />

        <path d="M402.500 115V1200M435.500 115V1200M555.500 115V1200M187 333.500H1600M187 366.500H1600" stroke="#7fcccb" strokeDasharray="4 3" />
        <path d="M403 333.500h153M435.500 245v122M403 366.500h153M402.500 245v122" stroke="#b9c7a2" strokeDasharray="4 3" />
        <path d="M435.500 245v20" stroke="#2336a8" strokeWidth="2.500" strokeDasharray="7 2" />

        <path d="M257 256.500h178" stroke="#6f50b4" />
        <path d="M330 267.500h105" stroke="#5a3c8a" />
        <path d="M403 256.500h153M403 267.500h153" stroke="#8a8880" strokeDasharray="8 2" />
        <path d="M328 333.500h74M257 366.500h145" stroke="#3c6cb8" />
        <path d="M259.500 257v30M259.500 300v66M332.500 268v35M332.500 315v18" stroke="#4d4fb8" />
        <path d="M259.500 257l-2 7h4zM332.500 268l-2 7h4z" fill="#2d2d3d" />
        <path d="M259.500 366l-2-7h4zM332.500 333l-2-7h4z" fill="#2626a0" />

        <g stroke="#2336b8" strokeWidth="1.200">
          <circle cx="476" cy="306" r="4.500" />
          <circle cx="481.500" cy="306" r="4.500" />
          <circle cx="476" cy="306" r="2" />
          <circle cx="481.500" cy="306" r="2" />
        </g>

        <g className="font-['Liberation_Mono',monospace] text-[7px] font-bold">
          <text x="249" y="297" fill="#2f2f92">100.0</text>
          <text x="323" y="312" fill="#2f2f92">60.0</text>
          <text x="489" y="300" fill="#1c2fae">PULL DIRECTION</text>
          <text x="557" y="245" fill="#8a5a34">ADTM5</text>
          <text x="560" y="308" fill="#8a5a34">APNT1</text>
          <text x="435" y="368" fill="#86743f">MOLD_RIGHT</text>
          <text x="484" y="368" fill="#86743f">APNT2</text>
          <text x="402" y="332" fill="#95764c">MOLD_FRONT</text>
          <text x="434" y="280" fill="#a0693c">APNT0</text>
        </g>
        <path d="M553 304l5 4M558 304l-5 4M476 363l5 5M481 363l-5 5M433 276l5 5M438 276l-5 5" stroke="#7a4a30" />
        <path d="M485 306h16" stroke="#a0714c" strokeDasharray="3 1" />

        {captionBlocks.map(([x, y, w, h, fill], i) => (
          <rect key={i} x={x} y={y} width={w} height={h} fill={fill} />
        ))}

        <path d="M506.500 379v12l3-2.500 2.500 5 1.500-1-2-4.500h3.500z" fill="#f5f5f5" stroke="#222" />
      </g>
    </svg>
  );
}

function Viewport() {
  return (
    <main className="relative flex-1 min-w-0">
      <Model />
      <div role="toolbar" className="relative mt-1 ml-[107px] w-fit h-[22px] flex border border-[#c4c8c7] bg-[#e9eaea] pl-1">
        {viewTools.map((tool) => (
          <button
            key={tool.label}
            type="button"
            aria-label={tool.label}
            className={clsx(
              "flex items-center justify-center border-l border-[#c9cdcc]",
              tool.wide ? "w-6" : "w-[20px]",
              tool.pressed && "bg-[#d3d8d7]"
            )}
          >
            <Icon>{tool.art}</Icon>
          </button>
        ))}
      </div>
    </main>
  );
}

/* ---------- waterline dialog ---------- */

const elements = [
  { name: "Name (名称)", info: "WATERLINE_1" },
  { name: "Diameter (直径)", info: "圆环直径 = 5" },
  { name: "Circuit (回路)", info: "定义", current: true },
  { name: "End Condition...", info: "可选的" },
  { name: "Intsct Parts ...", info: "必需的" },
];

const dialogButton = "w-9 h-[15px] rounded-xs border text-[10px] leading-[13px] font-bold";
const plainButton = "border-[#b9bebd] bg-[#e4e7e7] text-[#3a3d3d]";

function WaterlineDialog() {
  return (
    <div
      role="dialog"
      aria-label="等高线"
      className="absolute top-[114px] -right-2 w-[168px] h-[142px] border-2 border-[#b5bebd] bg-[#dfe5e4] pl-[3px] text-[10px]"
    >
      <div className="flex items-center h-[19px] pr-2 text-[#8b8f8f]">
        <span className="flex-1 pr-1 text-center leading-none">等高线</span>
        <button type="button" aria-label="关闭对话框">
          <svg viewBox="0 0 6 6" className="w-1.5 h-1.5" aria-hidden="true">
            <path d="M0 0l6 6M6 0L0 6" stroke="#8b8f8f" strokeWidth="1.200" />
          </svg>
        </button>
      </div>
      <div className="h-[84px] mr-2 bg-[#e8e9e9] border border-[#b9bebd]">
        <table className="w-full table-fixed whitespace-nowrap">
          <thead>
            <tr className="h-[15px] text-[10px] leading-none text-[#3b3e3e]">
              <th className="w-[87px] font-bold pl-5 pt-[3px] text-left">元素</th>
              <th className="font-bold pl-1 pt-[3px] text-left">信息</th>
            </tr>
          </thead>
          <tbody className="font-['Liberation_Mono','Noto_Sans_CJK_SC',monospace] text-[8px] leading-[11px] text-[#3b3e3e]">
            {elements.map((el) => (
              <tr key={el.name} className="h-[11px]">
                <td className="p-0">
                  <span className="inline-block w-3 pl-[3px]">{el.current ? ">" : ""}</span>
                  {el.name}
                </td>
                <td className="p-0">{el.info}</td>
              </tr>
            ))}
          </tbody>
        </table>
      </div>
      <div className="grid grid-cols-[63px_59px_36px] gap-y-px mt-1">
        <button type="button" className={clsx(dialogButton, "border-[#8f9494] bg-[#c3c7c7] text-[#2f3131]")}>定义</button>
        <button type="button" className={clsx(dialogButton, plainButton)}>参考</button>
        <button type="button" className={clsx(dialogButton, plainButton)}>信息</button>
        <button type="button" className={clsx(dialogButton, "border-[#7fb4d4] bg-[#8ccbee] text-[#24506e]")}>确定</button>
        <button type="button" className={clsx(dialogButton, plainButton)}>取消</button>
        <button type="button" disabled className={clsx(dialogButton, "border-[#c6cbca] bg-[#dde2e1] text-[#9a9e9e]")}>预览</button>
      </div>
    </div>
  );
}

function Desktop() {
  return (
    <div className="w-24 shrink-0 flex flex-col justify-end overflow-hidden bg-gradient-to-r from-[#10538c] to-[#154480] font-['Liberation_Sans',sans-serif] font-bold">
      <div className="h-[42px] flex items-center bg-gradient-to-r from-[#12548c] via-[#14588f] to-[#175a90] text-[28px] leading-none italic text-[#35c3dc] drop-shadow-md">
        02
      </div>
      <div className="h-[25px] bg-[#11417c] text-[32px] leading-[25px] text-[#174f97]">rd</div>
    </div>
  );
}

export default function App() {
  return (
    <div className="relative flex min-h-screen overflow-hidden bg-[#e6e6e6] font-['Liberation_Sans','Noto_Sans_CJK_SC',sans-serif]">
      <div className="flex-1 min-w-0 flex flex-col border-r-2 border-[#85898b]">
        <header className="relative">
          <QuickAccess />
          <TabRow />
          <div className="absolute left-[423px] top-[3px]">
            {titleBlocks.map((row, i) => (
              <div key={i} className="flex">
                {row.map((color, j) => (
                  <span key={j} className="w-[11px] h-3" style={{ backgroundColor: color }} />
                ))}
              </div>
            ))}
          </div>
          <Ribbon />
        </header>
        <div className="flex-1 flex">
          <ModelTree />
          <Viewport />
        </div>
      </div>
      <Desktop />
      <WaterlineDialog />
    </div>
  );
}
